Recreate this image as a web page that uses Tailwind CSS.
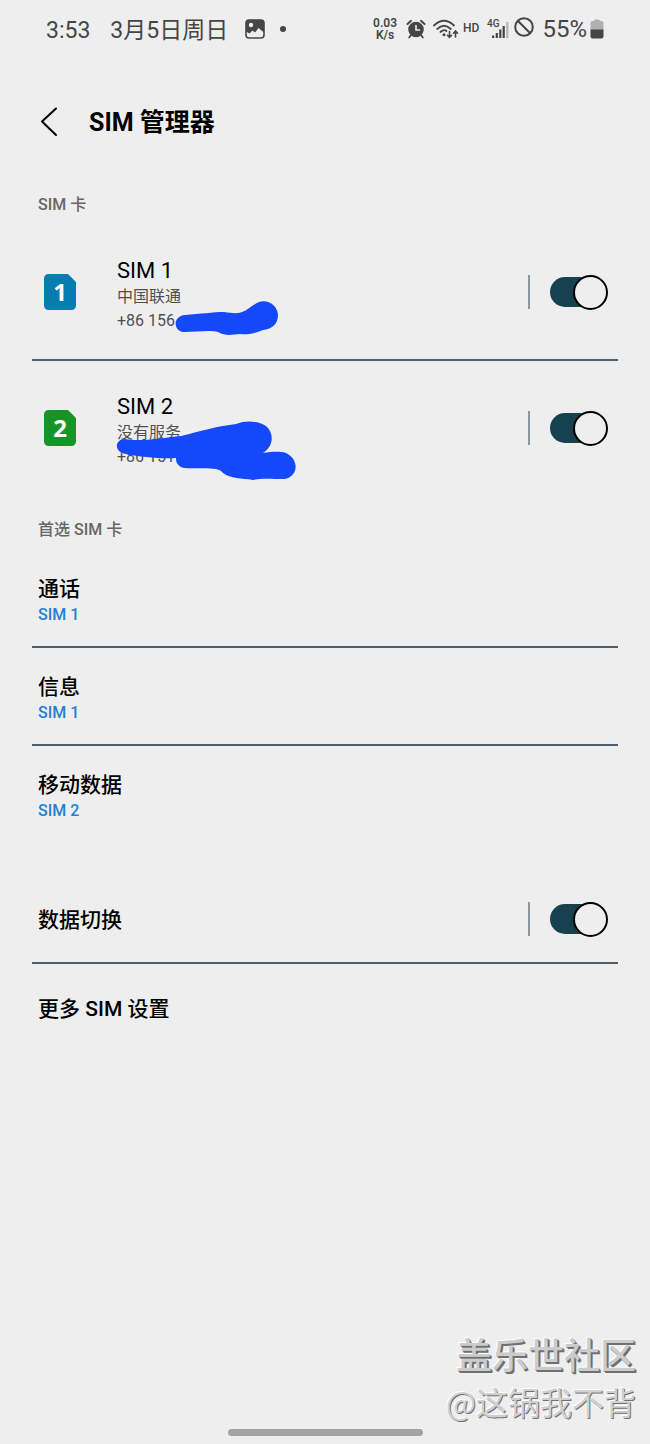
<!DOCTYPE html>
<html lang="zh-CN">
<head>
  <meta charset="UTF-8" />
  <meta name="viewport" content="width=device-width, initial-scale=1.0"/>
  <title>SIM 管理器</title>
  <script src="https://cdn.jsdelivr.net/npm/@tailwindcss/browser@4"></script>
</head>
<body class="bg-[#eeeeee] text-black font-['Roboto','Noto_Sans_CJK_SC',sans-serif] min-h-screen flex flex-col">

  <!-- Status bar -->
  <div class="flex items-center justify-between h-[62px] px-[46px] text-[#454545]">
    <div class="flex items-center">
      <span class="text-[23px]">3:53</span>
      <span class="text-[23px] ml-5">3月5日周日</span>
      <svg class="w-5 h-5 ml-[17px] -mt-1" viewBox="0 0 20 20">
        <rect x="1" y="1" width="18" height="18" rx="3" fill="none" stroke="currentColor" stroke-width="1.6"/>
        <path d="M1 3 Q1 1 3 1 H17 Q19 1 19 3 V13.5 L16.5 11.5 L13.5 9 L10 13.5 L7.5 11.5 L4.5 14.5 L1 12.5 Z" fill="currentColor"/>
        <circle cx="6" cy="6" r="2.2" fill="#eeeeee"/>
      </svg>
      <span class="w-[6px] h-[6px] rounded-full bg-[#454545] ml-[15px] -mt-1"></span>
    </div>
    <div class="flex items-center -mt-1">
      <span class="flex flex-col items-center text-[12px] leading-3 font-semibold">
        <span>0.03</span>
        <span>K/s</span>
      </span>
      <!-- alarm -->
      <svg class="w-5 h-5 ml-[9px]" viewBox="0 0 20 20" fill="none" stroke="currentColor" stroke-linecap="round">
        <circle cx="10" cy="10.5" r="7.8" fill="currentColor" stroke="none"/>
        <path d="M1.5 5 L5 1.8 M18.5 5 L15 1.8" stroke-width="2"/>
        <path d="M5 16 L3.2 18.5 M15 16 L16.8 18.5" stroke-width="1.8"/>
        <path d="M10 6.5 V11 H13.5" stroke="#eeeeee" stroke-width="1.6"/>
      </svg>
      <!-- wifi -->
      <svg class="w-[26px] h-5 ml-[7px]" viewBox="0 0 26 20" fill="none" stroke="currentColor" stroke-width="1.8" stroke-linecap="round">
        <path d="M1 6.5 Q11 -3 21 6.5"/>
        <path d="M4.2 10 Q11 3.5 17.8 10"/>
        <path d="M7.4 13 Q11 10 13.5 12"/>
        <circle cx="11" cy="15.8" r="1.5" fill="currentColor" stroke="none"/>
        <path d="M16.5 12.5 V18 M14.5 16.3 L16.5 18.4 L18.5 16.3" stroke-width="1.6"/>
        <path d="M22.5 18 V12.5 M20.5 14.2 L22.5 12 L24.5 14.2" stroke-width="1.6"/>
      </svg>
      <span class="text-[12px] font-medium ml-1 -mt-[2px]">HD</span>
      <!-- 4G signal -->
      <svg class="w-[22px] h-5 ml-2" viewBox="0 0 22 20" fill="currentColor">
        <text x="0" y="8" font-size="10" font-weight="500">4G</text>
        <rect x="5" y="16.5" width="2.2" height="2.5"/>
        <rect x="8.7" y="14" width="2.2" height="5"/>
        <rect x="12.2" y="10.5" width="2.2" height="8.5"/>
        <rect x="15.6" y="7" width="2.2" height="12"/>
        <rect x="19.2" y="3" width="2.2" height="16" fill="#b5b5b5"/>
      </svg>
      <svg class="w-5 h-5 ml-[5px] -mt-1" viewBox="0 0 20 20" fill="none" stroke="currentColor" stroke-width="2">
        <circle cx="10" cy="10" r="8.8"/>
        <path d="M3.8 3.8 L16.2 16.2"/>
      </svg>
      <span class="text-[24px] ml-2">55%</span>
      <svg class="w-[14px] h-5 ml-[3px]" viewBox="0 0 14 20">
        <path d="M4 2 Q4 0.5 5.5 0.5 H8.5 Q10 0.5 10 2 H11.5 Q13.5 2 13.5 4 V11 H0.5 V4 Q0.5 2 2.5 2 Z" fill="#b0b0b0"/>
        <path d="M0.5 10.5 H13.5 V17.5 Q13.5 19.5 11.5 19.5 H2.5 Q0.5 19.5 0.5 17.5 Z" fill="currentColor"/>
      </svg>
    </div>
  </div>

  <!-- Header -->
  <header class="flex items-center mt-7 h-16 pl-[38px]">
    <button type="button" aria-label="返回" class="w-5 h-8">
      <svg class="w-5 h-8" viewBox="0 0 20 32" fill="none" stroke="black" stroke-width="2" stroke-linecap="round" stroke-linejoin="round">
        <path d="M18 2.5 L4 15.5 L18 29"/>
      </svg>
    </button>
    <h1 class="text-[25px] font-bold ml-[31px] pt-[2px]">SIM 管理器</h1>
  </header>

  <main class="px-8 mt-[31px]">
    <h2 class="flex items-center h-10 pl-[6px] text-[16px] font-medium text-[#666666]">SIM 卡</h2>

    <!-- SIM 1 -->
    <div class="relative flex items-center justify-between border-b-2 border-[#4d5f6e] pl-3 pr-[10px]">
      <div class="flex items-center">
        <svg class="w-8 h-9" viewBox="0 0 32 36">
          <path d="M5 0 H23 Q24 0 25 1 L31 7 Q32 8 32 9 V31 Q32 36 27 36 H5 Q0 36 0 31 V5 Q0 0 5 0 Z" fill="#057db0"/>
          <text x="16" y="27" font-size="24" font-weight="700" text-anchor="middle" fill="white" font-family="Noto Sans">1</text>
        </svg>
        <div class="ml-[41px] pt-8 pb-[26px]">
          <label for="sim1" class="block text-[22px] leading-7">SIM 1</label>
          <p class="text-[16px] leading-6 text-[#505050]">中国联通</p>
          <p class="text-[16px] leading-6 text-[#505050]">+86 156</p>
        </div>
      </div>
      <div class="flex items-center">
        <span class="w-[2px] h-[34px] bg-[#8d989e] mr-5"></span>
        <input id="sim1" type="checkbox" role="switch" checked class="appearance-none relative w-[58px] h-[35px] before:absolute before:left-0 before:top-[2px] before:w-[52px] before:h-[30px] before:rounded-full before:bg-[#18414f] after:absolute after:right-0 after:top-0 after:w-[35px] after:h-[35px] after:rounded-full after:border-2 after:border-black after:bg-[#eeeeee]" />
      </div>
      <svg class="absolute left-[143px] top-[76px] w-[104px] h-[35px]" viewBox="0 0 104 35" fill="#1548fb">
        <path d="M10 14 C25 13 38 11 49 11 C57 12 62 13 67 11 C73 9 77 4 84 1 C93 -2 103 5 103 14 C103 23 97 28 88 29 C80 32 75 34 65 33 C56 34 50 35 43 31 C36 29 20 31 10 31 C-2 31 -3 15 10 14 Z"/>
      </svg>
    </div>

    <!-- SIM 2 -->
    <div class="relative flex items-center justify-between pl-3 pr-[10px]">
      <div class="flex items-center">
        <svg class="w-8 h-9" viewBox="0 0 32 36">
          <path d="M5 0 H23 Q24 0 25 1 L31 7 Q32 8 32 9 V31 Q32 36 27 36 H5 Q0 36 0 31 V5 Q0 0 5 0 Z" fill="#159528"/>
          <text x="16" y="27" font-size="24" font-weight="700" text-anchor="middle" fill="white" font-family="Noto Sans">2</text>
        </svg>
        <div class="ml-[41px] pt-8 pb-[26px]">
          <label for="sim2" class="block text-[22px] leading-7">SIM 2</label>
          <p class="text-[16px] leading-6 text-[#505050]">没有服务</p>
          <p class="text-[16px] leading-6 text-[#505050]">+86 151</p>
        </div>
      </div>
      <div class="flex items-center">
        <span class="w-[2px] h-[34px] bg-[#8d989e] mr-5"></span>
        <input id="sim2" type="checkbox" role="switch" checked class="appearance-none relative w-[58px] h-[35px] before:absolute before:left-0 before:top-[2px] before:w-[52px] before:h-[30px] before:rounded-full before:bg-[#18414f] after:absolute after:right-0 after:top-0 after:w-[35px] after:h-[35px] after:rounded-full after:border-2 after:border-black after:bg-[#eeeeee]" />
      </div>
      <svg class="absolute left-[84px] top-[60px] w-[180px] h-[59px]" viewBox="0 0 180 59" fill="#1548fb">
        <path d="M9 18 C25 21 45 17 65 15 C85 10 102 5 120 3 C130 -1 142 0 150 5 C159 13 157 26 147 32 C155 31 163 30 170 32 C183 38 183 55 169 58 C155 58 145 57 137 59 C125 57 115 58 107 52 C103 45 85 48 68 47 C61 45 60 41 60 37 C45 38 25 36 10 33 C-3 31 -1 18 9 18 Z"/>
      </svg>
    </div>

    <h2 class="flex items-center h-10 mt-[15px] pl-[6px] text-[16px] font-medium text-[#666666]">首选 SIM 卡</h2>

    <!-- Preferred SIM -->
    <a href="#" class="block pl-[6px] pt-[26px] pb-[18px] leading-[26px] font-medium border-b-2 border-[#4d5f6e]">
      <span class="block text-[21px]">通话</span>
      <span class="block text-[16px] leading-[26px] text-[#2080d8]">SIM 1</span>
    </a>
    <a href="#" class="block pl-[6px] pt-[26px] pb-[18px] leading-[26px] font-medium border-b-2 border-[#4d5f6e]">
      <span class="block text-[21px]">信息</span>
      <span class="block text-[16px] leading-[26px] text-[#2080d8]">SIM 1</span>
    </a>
    <a href="#" class="block pl-[6px] pt-[26px] pb-[20px] leading-[26px] font-medium">
      <span class="block text-[21px]">移动数据</span>
      <span class="block text-[16px] leading-[26px] text-[#2080d8]">SIM 2</span>
    </a>

    <!-- Data switching -->
    <div class="flex items-center justify-between mt-8 h-[88px] border-b-2 border-[#4d5f6e] pl-[6px] pr-[10px]">
      <label for="dataSwitch" class="pt-1 text-[21px] font-medium">数据切换</label>
      <div class="flex items-center">
        <span class="w-[2px] h-[34px] bg-[#8d989e] mr-5"></span>
        <input id="dataSwitch" type="checkbox" role="switch" checked class="appearance-none relative w-[58px] h-[35px] before:absolute before:left-0 before:top-[2px] before:w-[52px] before:h-[30px] before:rounded-full before:bg-[#18414f] after:absolute after:right-0 after:top-0 after:w-[35px] after:h-[35px] after:rounded-full after:border-2 after:border-black after:bg-[#eeeeee]" />
      </div>
    </div>
    <a href="#" class="flex items-center h-[88px] pt-1 pl-[6px] text-[21px] font-medium">更多 SIM 设置</a>
  </main>

  <!-- Community watermark and gesture bar -->
  <footer class="mt-auto">
    <div class="text-right pr-[14px] mb-1 font-['Noto_Sans_CJK_SC',sans-serif]">
      <p class="text-[36px] leading-[48px] font-medium text-[#cccccc] [text-shadow:1px_1px_0_#707070,2px_2px_0_#707070,-1px_-1px_0_#fff]">盖乐世社区</p>
      <p class="text-[32px] leading-[48px] text-[#d0d0d0] [text-shadow:1px_1px_0_#707070,-1px_-1px_0_#fff]">@这锅我不背</p>
    </div>
    <div class="w-[195px] h-[7px] rounded-full bg-[#a3a3a3] mx-auto mb-2"></div>
  </footer>
</body>
</html>
